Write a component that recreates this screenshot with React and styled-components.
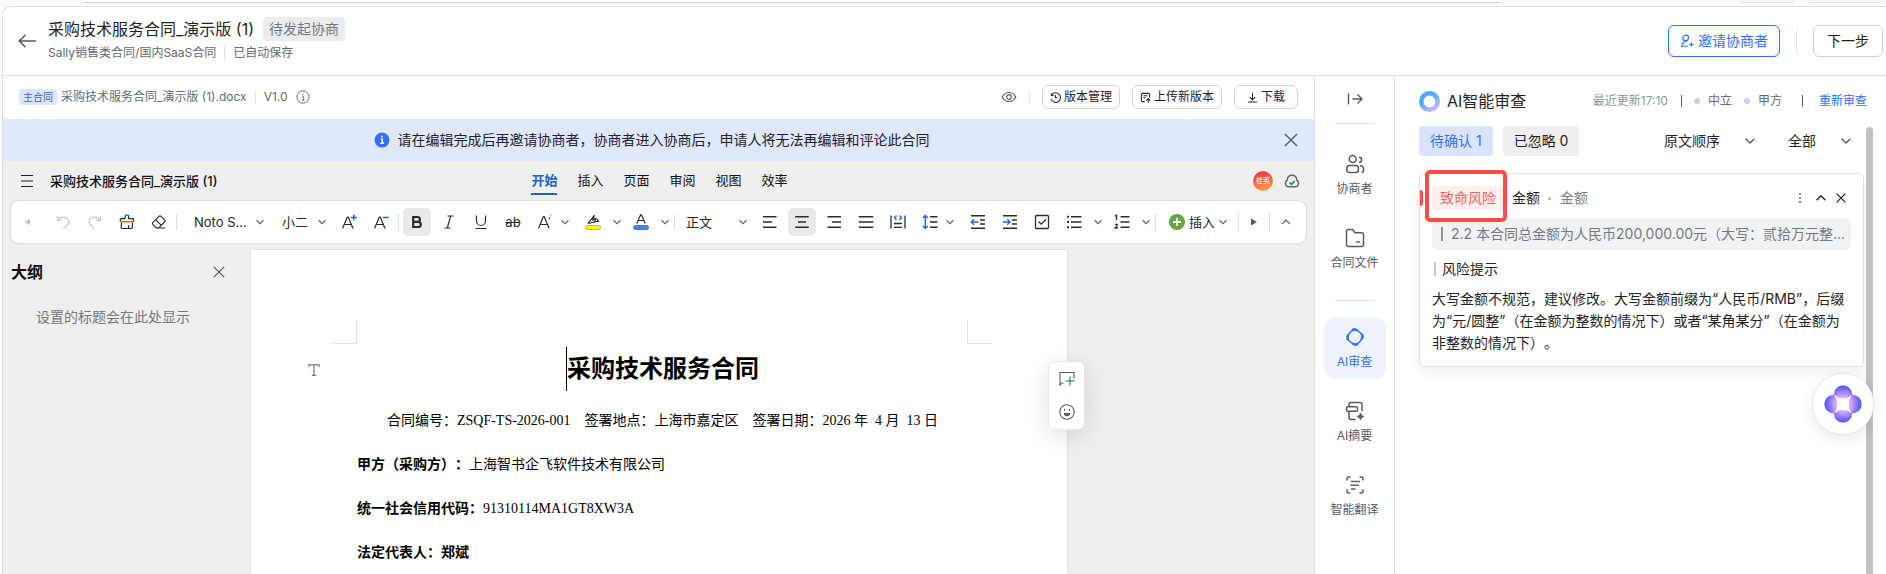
import React from 'react';
import styled, { createGlobalStyle, css } from 'styled-components';

const GlobalStyle = createGlobalStyle`
  * {
    box-sizing: border-box;
  }

  body {
    margin: 0;
    background: #fafafa;
    color: #1f2329;
    font-family: Inter, "Noto Sans CJK SC", sans-serif;
    font-size: 14px;
    line-height: 22px;
  }

  button, select {
    font: inherit;
    color: inherit;
    margin: 0;
    padding: 0;
    border: 0;
    background: none;
    white-space: nowrap;
    cursor: pointer;
  }

  h1, h2, h3, p {
    margin: 0;
    font-weight: normal;
  }

  svg {
    display: block;
    flex: none;
  }
`

/* ---------- shared ---------- */

const Page = styled.div`
  height: 100vh;
  display: flex;
  flex-direction: column;
  overflow: hidden;
`
const BrowserStrip = styled.div`
  display: flex;
  flex: none;
  height: 6px;
  padding-left: 82px;
  align-items: flex-start;
`
const AddressBar = styled.div`
  flex: 0 1 1420px;
  height: 3px;
  border-bottom: 1px solid #cfcfcf;
  border-radius: 0 0 12px 12px;
  background: #fff;
`
const StripPill = styled.div`
  width: ${props => props.$wide ? '76px' : '54px'};
  height: 3px;
  margin-left: ${props => props.$wide ? '14px' : '238px'};
  border-bottom: 1px solid #e4e4e4;
  border-radius: 0 0 12px 12px;
  background: #f4f4f4;
`
const Frame = styled.div`
  flex: 1;
  min-height: 0;
  display: flex;
  flex-direction: column;
  margin-left: 2px;
  border: 1px solid #dedfe0;
  border-width: 1px 0 0 1px;
  border-top-left-radius: 9px;
  background: #fffffe;
  overflow: hidden;
`
const VLine = styled.span`
  flex: none;
  width: 1px;
  height: ${props => props.$h || 12}px;
  background: ${props => props.$color || '#dee0e3'};
`
const IconButton = styled.button`
  display: flex;
  align-items: center;
  justify-content: center;
  flex: none;
  color: #555c66;
`

/* ---------- header ---------- */

const Header = styled.header`
  display: flex;
  align-items: center;
  flex: none;
  height: 69px;
  padding: 0 3px 0 14px;
  border-bottom: 1px solid #dee0e3;
`
const Titles = styled.div`
  display: flex;
  flex-direction: column;
  gap: 2px;
  margin-left: 11px;
  margin-bottom: 2px;
`
const TitleRow = styled.div`
  display: flex;
  align-items: center;
  gap: 9px;

  h1 {
    font-size: 16px;
    line-height: 24px;
  }
`
const StatusTag = styled.span`
  padding: 0 6px;
  border-radius: 4px;
  background: #ececec;
  color: #747980;
  line-height: 24px;
`
const Crumbs = styled.div`
  display: flex;
  align-items: center;
  gap: 8px;
  font-size: 12px;
  line-height: 20px;
  color: #646a73;
`
const HeaderActions = styled.div`
  display: flex;
  align-items: center;
  gap: 16px;
  margin-left: auto;
`
const HeaderButton = styled.button`
  display: flex;
  align-items: center;
  justify-content: center;
  gap: 4px;
  height: 32px;
  padding: 0 ${props => props.$primary ? 11 : 13}px;
  border: 1px solid ${props => props.$primary ? '#3370ff' : '#d0d3d6'};
  border-radius: 6px;
  color: ${props => props.$primary ? '#3370ff' : '#1f2329'};
`

/* ---------- body layout ---------- */

const Body = styled.div`
  flex: 1;
  min-height: 0;
  display: flex;
`
const Main = styled.main`
  flex: 1;
  min-width: 0;
  display: flex;
  flex-direction: column;
`
const FileBar = styled.div`
  display: flex;
  align-items: center;
  flex: none;
  height: 43px;
  padding: 0 16px 1px 16px;
  font-size: 12px;
  color: #646a73;
`
const FileTag = styled.span`
  padding: 0 4px;
  margin-right: 4px;
  border-radius: 4px;
  background: #dbe5ff;
  color: #3a62d8;
  font-size: 10px;
  line-height: 16px;
`
const FileInfo = styled.div`
  display: flex;
  align-items: center;
  gap: 8px;
`
const FileActions = styled.div`
  display: flex;
  align-items: center;
  gap: 12px;
  margin-left: auto;
`
const SmallButton = styled.button`
  display: flex;
  align-items: center;
  justify-content: center;
  gap: 3px;
  height: 24px;
  min-width: 64px;
  padding: 0 7px;
  border: 1px solid #d0d3d6;
  border-radius: 6px;
  color: #1f2329;
  line-height: 20px;
`
const Banner = styled.div`
  display: flex;
  align-items: center;
  flex: none;
  height: 42px;
  padding: 0 16px;
  background: #e0e8fd;

  p {
    flex: 1;
    display: flex;
    align-items: center;
    justify-content: center;
    gap: 8px;
    padding-bottom: 1px;
  }
`

/* ---------- editor ---------- */

const Editor = styled.section`
  flex: 1;
  min-height: 0;
  display: flex;
  flex-direction: column;
  background: #efefee;
`
const MenuRow = styled.div`
  display: grid;
  grid-template-columns: 1fr auto 1fr;
  align-items: center;
  flex: none;
  height: 40px;
  padding: 0 14px 0 16px;
  font-size: 13px;
`
const DocName = styled.div`
  display: flex;
  align-items: center;
  gap: 15px;
  font-weight: 500;
  color: #111;

  button {
    color: #222;
  }
`
const Tabs = styled.nav`
  display: flex;
  gap: 20px;
`
const Tab = styled.button`
  height: 28px;
  line-height: 22px;
  border-bottom: 2px solid transparent;
  color: #111;

  ${props => props.$active && css`
    color: #1f5fd0;
    font-weight: bold;
    border-bottom-color: #1f5fd0;
  `}
`
const MenuRight = styled.div`
  display: flex;
  align-items: center;
  justify-content: flex-end;
  gap: 11px;
`
const Avatar = styled.span`
  width: 20px;
  height: 20px;
  border-radius: 50%;
  background: linear-gradient(160deg, #f4453f 20%, #fca04a 90%);
  color: #fff;
  font-size: 7px;
  line-height: 20px;
  text-align: center;
`
const Toolbar = styled.div`
  display: flex;
  align-items: center;
  flex: none;
  height: 42px;
  margin: 0 8px;
  border-radius: 8px;
  background: #fffffe;
  box-shadow: 0 0 2px rgba(0, 0, 0, 0.25);
  font-size: 13px;
  color: #262626;
`
const Tool = styled.button`
  display: flex;
  align-items: center;
  justify-content: center;
  flex: none;
  width: 28px;
  height: 28px;
  margin: 0 2px;
  border-radius: 5px;
  background: ${props => props.$on ? '#e9e9e9' : 'none'};
  color: ${props => props.$muted ? '#c4c4c4' : '#2b2b2b'};
`
const ToolEdge = styled(IconButton)`
  width: 36px;
  height: 28px;
  padding-right: 4px;
  color: ${props => props.$muted ? '#c4c4c4' : '#666'};
`
const ToolArrow = styled.button`
  display: flex;
  align-items: center;
  justify-content: ${props => props.$tight ? 'flex-start' : 'center'};
  flex: none;
  width: 16px;
  height: 28px;
`
const ToolSep = styled.span`
  flex: none;
  width: 1px;
  height: ${props => props.$tall ? 20 : 16}px;
  margin: ${props => props.$tall ? '0' : '0 2px 0 1px'};
  background: #dcdcdc;
`
const SelectBox = styled.label`
  display: grid;
  align-items: center;
  flex: none;
  width: ${props => props.$w}px;
  padding: 0 7px 0 ${props => props.$pad}px;

  select {
    grid-area: 1 / 1;
    width: 100%;
    height: 28px;
    appearance: none;
  }

  svg {
    grid-area: 1 / 1;
    justify-self: end;
    pointer-events: none;
  }
`
const InsertButton = styled.button`
  display: flex;
  align-items: center;
  flex: none;
  height: 28px;
  padding: 0 7px 0 11px;
  gap: 4px;
  color: #222;
`
const ToolEnd = styled.div`
  display: flex;
  align-items: center;
  margin-left: auto;
`
const ScrollRight = styled(IconButton)`
  width: 30px;
  height: 28px;
`
const Workspace = styled.div`
  flex: 1;
  min-height: 0;
  display: flex;
  padding-top: 7px;
  overflow: hidden;
`
const Outline = styled.aside`
  flex: none;
  width: 248px;
  padding: 10px 26px 0 8px;

  p {
    padding: 22px 0 0 25px;
    color: #76777a;
  }
`
const OutlineHead = styled.div`
  display: flex;
  align-items: center;
  justify-content: space-between;

  h2 {
    font-size: 16px;
    line-height: 24px;
    font-weight: bold;
    color: #111;
  }
`
const Sheet = styled.article`
  position: relative;
  flex: 0 1 816px;
  display: grid;
  grid-template-columns: 106px 1fr 99px;
  align-content: start;
  padding-top: 70px;
  background: #fffffe;
  box-shadow: 0 0 2px rgba(0, 0, 0, 0.15);
  color: #000;
  font-family: "Liberation Serif", "Noto Sans CJK SC", serif;
  text-spacing-trim: space-all;
`
const CropMarks = styled.div`
  grid-column: 1 / -1;
  display: flex;
  justify-content: space-between;
  height: 27px;
  padding: 0 75px 0 81px;

  span {
    width: 25px;
    height: 24px;
    border: solid #e2e2e2;
    border-width: 0 1px 1px 0;
  }

  span:last-child {
    border-width: 0 0 1px 1px;
  }
`
const Gutter = styled.div`
  display: flex;
  align-items: center;
  justify-content: flex-end;
  padding: 0 37px 6px 0;
  color: #777;
`
const DocTitle = styled.h2`
  justify-self: center;
  margin-bottom: 8px;
  border-left: 1px solid #000;
  font-size: 24px;
  line-height: 44px;
  font-weight: bold;
`
const DocLine = styled.p`
  grid-column: 2;
  line-height: 44px;
  white-space: pre;
  text-align: ${props => props.$center ? 'center' : 'left'};
`
const FloatTools = styled.div`
  position: absolute;
  top: 111px;
  right: -18px;
  display: flex;
  flex-direction: column;
  justify-content: space-around;
  align-items: center;
  width: 37px;
  height: 69px;
  border: 1px solid #e6e6e6;
  border-radius: 7px;
  background: #fffffe;
  box-shadow: 0 6px 24px rgba(0, 0, 0, 0.12);
`

/* ---------- side rail ---------- */

const Rail = styled.nav`
  flex: none;
  width: 81px;
  display: flex;
  flex-direction: column;
  align-items: center;
  padding-top: 15px;
  border: 1px solid #dee0e3;
  border-width: 0 1px;
`
const RailLine = styled.span`
  flex: none;
  width: 40px;
  height: 1px;
  margin: ${props => props.$first ? '16px 0 20px' : '8px 0 16px'};
  background: #dee0e3;
`
const RailItem = styled.button`
  display: flex;
  flex-direction: column;
  align-items: center;
  flex: none;
  gap: 6px;
  width: 62px;
  height: 62px;
  margin-bottom: 12px;
  padding-top: 10px;
  border-radius: 12px;
  font-size: 12px;
  line-height: 18px;
  background: ${props => props.$active ? '#eff3ff' : 'none'};
  color: ${props => props.$active ? '#3370ff' : '#555c66'};
`

/* ---------- review panel ---------- */

const Panel = styled.aside`
  flex: 0 0 491px;
  min-width: 0;
  padding: 13px 13px 0 24px;
  display: flex;
  flex-direction: column;
`
const PanelHead = styled.div`
  display: flex;
  align-items: center;
  flex: none;
  gap: 7px;
  padding-right: 6px;

  h2 {
    font-size: 16px;
    line-height: 24px;
  }
`
const Meta = styled.div`
  display: flex;
  align-items: center;
  margin-left: auto;
  font-size: 12px;
  color: #646a73;

  time {
    margin-right: 13px;
    color: #8f959e;
  }

  a {
    margin-left: 16px;
    color: #3370ff;
    text-decoration: none;
  }
`
const Sides = styled.div`
  display: flex;
  gap: 12px;
  margin: 0 20px 0 12px;
`
const Side = styled.span`
  display: flex;
  align-items: center;
  gap: 8px;

  &::before {
    content: "";
    width: 6px;
    height: 6px;
    border-radius: 50%;
    background: #c3d0fb;
  }
`
const PanelScroll = styled.div`
  flex: 1;
  display: flex;
  margin-top: 12px;
`
const PanelContent = styled.div`
  flex: 1;
  min-width: 0;
`
const ScrollThumb = styled.div`
  flex: none;
  width: 7px;
  margin: 2px 0 0 2px;
  border-radius: 4px 4px 0 0;
  background: #c1c1c1;
`
const Filters = styled.div`
  display: flex;
  align-items: center;
  height: 32px;
`
const Pill = styled.button`
  height: 30px;
  margin-right: 10px;
  padding: 0 11px;
  border-radius: 4px;
  background: ${props => props.$active ? '#dbe4ff' : '#efefef'};
  color: ${props => props.$active ? '#3370ff' : '#1f2329'};
`
const FilterSelects = styled.div`
  display: flex;
  gap: 26px;
  margin-left: auto;
  padding-right: 6px;
`
const RiskCard = styled.article`
  display: flex;
  flex-direction: column;
  margin-top: 16px;
  padding: 12px;
  border: 1px solid #dee0e3;
  border-radius: 5px;
  box-shadow: 0 6px 12px rgba(31, 35, 41, 0.06);
`
const RiskHead = styled.div`
  display: flex;
  align-items: center;
  height: 24px;
`
const RiskMark = styled.span`
  width: 3px;
  height: 16px;
  margin-left: -12px;
  border-radius: 0 3px 3px 0;
  background: #f54a45;
`
const RiskLevel = styled.span`
  position: relative;
  margin-left: 9px;
  padding: 0 8px;
  background: #fff0ef;
  color: #fb625d;
  line-height: 24px;

  &::after {
    content: "";
    position: absolute;
    inset: -16px -3px -12px -7px;
    border: 4px solid #f94b48;
    border-radius: 5px;
  }
`
const RiskName = styled.h3`
  margin-left: 8px;
  font-size: 14px;
`
const RiskKind = styled.span`
  display: flex;
  align-items: center;
  gap: 9px;
  margin-left: 8px;
  color: #7a8088;

  &::before {
    content: "";
    width: 3px;
    height: 3px;
    border-radius: 50%;
    background: #a8acb2;
  }
`
const RiskTools = styled.div`
  display: flex;
  align-items: center;
  gap: 10px;
  margin-left: auto;
  padding-right: 5px;
`
const Quote = styled.div`
  display: flex;
  align-items: center;
  gap: 8px;
  height: 32px;
  margin-top: 8px;
  padding: 0 4px 0 9px;
  border-radius: 6px;
  background: #f1f2f4;
  color: #747a84;
  white-space: nowrap;
`
const Bar = styled.span`
  flex: none;
  width: 2px;
  height: 14px;
  background: ${props => props.$dark ? '#8f959e' : '#c4c7cb'};
`
const TipTitle = styled.div`
  display: flex;
  align-items: center;
  gap: 6px;
  margin-top: 8px;
  padding-left: 2px;
`
const Tip = styled.p`
  margin-top: 8px;
  text-spacing-trim: space-all;
`
const AssistantButton = styled.button`
  position: fixed;
  right: 12px;
  top: 373px;
  display: flex;
  align-items: center;
  justify-content: center;
  width: 62px;
  height: 62px;
  border: 1px solid #e6e8f0;
  border-radius: 50%;
  background: #fff;
  box-shadow: 0 4px 14px rgba(31, 35, 41, 0.1);
`

/* ---------- icons ---------- */

const Icon = ({ size = 16, box = 16, sw = 1.3, children }) => (
  <svg width={size} height={size} viewBox={`0 0 ${box} ${box}`} fill="none" stroke="currentColor" strokeWidth={sw} aria-hidden="true">
    {children}
  </svg>
)

const BLUE = '#1b66e5'

const Chevron = ({ size = 8, color = '#666', sw = 1.2 }) => (
  <svg width={size} height={size} viewBox="0 0 8 8" fill="none" stroke={color} strokeWidth={sw} aria-hidden="true">
    <path d="M.5 2.2 4 5.6 7.5 2.2" />
  </svg>
)
const Cross = ({ size = 12, color = '#555c66', sw = 1.3 }) => (
  <svg width={size} height={size} viewBox="0 0 12 12" fill="none" stroke={color} strokeWidth={sw} aria-hidden="true">
    <path d="M.8.8 11.2 11.2M11.2.8.8 11.2" />
  </svg>
)

const icons = {
  undo: <Icon sw={1.2}><path d="M2.5 2v4.500H7M2.800 6.200C5 3.400 9 2.200 11.800 4c3 2 2.600 5.600.2 7.600L8.500 14.500" /></Icon>,
  redo: <Icon sw={1.2}><path d="M13.500 2v4.500H9M13.200 6.200C11 3.400 7 2.200 4.200 4c-3 2-2.600 5.600-.2 7.600L7.500 14.500" /></Icon>,
  brush: <Icon sw={1.2}>
    <path d="M6.200 4.600V2.300a1.300 1.300 0 0 1 1.300-1.300h.8a1.300 1.300 0 0 1 1.300 1.300v2.300h4.100a1 1 0 0 1 1 1v2.200M1.300 7.800V5.600a1 1 0 0 1 1-1h3.900M2.600 8.500l-.5 4.800q0 1.200 1.200 1.200h8.800q1 0 1.200-1.200l.3-4.800M9.300 14.200l.6-3" />
    <path d="M1.200 7.800h13.400" stroke="#e8662a" strokeWidth="1.400" />
  </Icon>,
  eraser: <Icon sw={1.2}><path d="M5 13.800 1.700 10.200q-.7-.8 0-1.500l6.500-6.500q.8-.7 1.600 0l4 4q.7.800 0 1.500L7.800 13.800zM4.800 5.800l5.500 5.500M5 14h9.500" /></Icon>,
  aPlus: <Icon sw={1.2}><path d="M1.500 14.500 6.300 3h1L12 14.500M3.300 10.500h7" /><path d="M12.800.5v6M9.800 3.500h6" stroke={BLUE} strokeWidth="1.400" /></Icon>,
  aMinus: <Icon sw={1.2}><path d="M1.500 14.500 6.300 3h1L12 14.500M3.300 10.500h7" /><path d="M9.800 3.500h6" stroke={BLUE} strokeWidth="1.400" /></Icon>,
  bold: <Icon sw={2.2}><path d="M4.200 3h4.300a2.400 2.400 0 0 1 0 4.800H4.200zM4.200 7.800h5a2.600 2.600 0 0 1 0 5.200h-5z" /></Icon>,
  italic: <Icon sw={1.2}><path d="M6.500 2h6M3.500 14h6M9.700 2l-3.400 12" /></Icon>,
  underline: <Icon sw={1.2}><path d="M3.500 1.500V7a4.500 4.500 0 0 0 9 0V1.500M2.500 14.500h11" /></Icon>,
  textFx: <Icon sw={1.2}><path d="M1.500 14.500 6.300 2.500h1L12 14.500M3.300 10.500h7" /><path d="m12 5.500.8-2.700M13.500 1.500l.2-.8" stroke={BLUE} /></Icon>,
  marker: <Icon sw={1.2}>
    <path d="M3 9.500 9.500 1.200M3.500 9.500q3-.8 5.500-1.500M9.500 1.200 7.800 6l3-1.500L9.500 8l4-.8-1.500-2.500" />
    <rect x=".5" y="11.500" width="15" height="4" rx="2" fill="#ffff00" stroke="#a9a92b" strokeWidth=".8" />
  </Icon>,
  fontColor: <Icon sw={1.2}>
    <path d="M3.800 9.500 7.600.8h.8l3.800 8.700M5.200 6.500h5.600" />
    <rect x=".5" y="11.500" width="15" height="4" rx="2" fill="#4285f4" stroke="#3463b8" strokeWidth=".8" />
  </Icon>,
  left: <Icon sw={1.4}><path d="M1 2.700h13.500M1 8h9M1 13.300h13.500" /></Icon>,
  center: <Icon sw={1.4}><path d="M1.200 2.700h13.600M4 8h8M1.200 13.300h13.600" /></Icon>,
  right: <Icon sw={1.4}><path d="M1.500 2.700H15M6 8h9M1.500 13.300H15" /></Icon>,
  justify: <Icon sw={1.4}><path d="M.8 2.700h14.400M.8 8h14.400M.8 13.300h14.400" /></Icon>,
  distribute: <Icon sw={1.3}><path d="M1 1.500v13M15 1.500v13M4 9.500h8M4 13.300h8" /><path d="M6.500 1.500 4.500 3.700l2 2.300M9.500 1.500l2 2.200-2 2.300" stroke={BLUE} /></Icon>,
  spacing: <Icon sw={1.4}><path d="M8 2.700h7.500M8 8h7.500M8 13.300h7.500" /><path d="M3.300 1.500v13M.8 4 3.300 1.500 5.800 4M.8 12l2.500 2.500L5.800 12" stroke={BLUE} /></Icon>,
  outdent: <Icon sw={1.4}><path d="M1 1.700h14M10 6h5M10 10h5M1 14.300h14" /><path d="M8.500 8h-7M4 5.300 1.300 8 4 10.700" stroke={BLUE} /></Icon>,
  indent: <Icon sw={1.4}><path d="M1 1.700h14M10 6h5M10 10h5M1 14.300h14" /><path d="M1 8h7M5.300 5.300 8 8l-2.700 2.700" stroke={BLUE} /></Icon>,
  check: <Icon sw={1.3}><rect x="1.500" y="1.500" width="13" height="13" rx="1" /><path d="m4.500 7.500 2.700 2.700L11.800 5.500" /></Icon>,
  bullets: <Icon sw={1.4}><path d="M5 2.700h10.500M5 8h10.500M5 13.300h10.500" /><path d="M1 2.700h2M1 8h2M1 13.300h2" strokeWidth="2" /></Icon>,
  numbers: <Icon sw={1.4}><path d="M6.500 2.700h9M6.500 8h9M6.500 13.300h9" /><path d="M1 2.300 2.500 1.200v4.800M1 10.800q1.500-1.200 2.300 0c.4 1-1.300 2-2.200 3.200h2.800" strokeWidth="1.300" /></Icon>,
  people: <Icon size={20} box={20} sw={1.5}><rect x="1.800" y="11.500" width="11.500" height="7" rx="2.500" /><circle cx="7.700" cy="5" r="3.500" /><path d="M14 3.200a2.600 2.600 0 0 1 0 5.200M15 12h1.200a2.300 2.300 0 0 1 2.300 2.300v2.200a2 2 0 0 1-2 2" /></Icon>,
  folder: <Icon size={20} box={20} sw={1.5}><path d="M1.500 3.300A1.800 1.800 0 0 1 3.300 1.500h4.200L10 4.700h6.700a1.800 1.800 0 0 1 1.800 1.800v10.200a1.800 1.800 0 0 1-1.800 1.800H3.300a1.800 1.800 0 0 1-1.800-1.800zM11 14h4" /></Icon>,
  review: <Icon size={20} box={20} sw={1.6}>
    <rect x="3.400" y="3.400" width="13.200" height="13.200" rx="5.600" transform="rotate(32 10 10)" />
    <path d="M7.500 2.600 10 2.100l2 .8M17.400 7.500l.5 2.500-.8 2M12.500 17.400l-2.500.5-2-.8M2.600 12.500 2.100 10l.8-2" strokeWidth="2" strokeLinecap="round" strokeLinejoin="round" />
  </Icon>,
  summary: <Icon size={20} box={20} sw={1.5}><rect x="1.500" y="5.800" width="11" height="4.500" rx="1.500" /><path d="M4 5.500V3.300a1.800 1.800 0 0 1 1.800-1.800H15a2 2 0 0 1 2 2V10M4 10.500v6a2 2 0 0 0 2 2h4.500" /><path d="m15.500 12 1.200 2.300L19 15.500l-2.300 1.200-1.200 2.300-1.200-2.300L12 15.500l2.300-1.200z" fill="currentColor" strokeWidth=".6" /></Icon>,
  translate: <Icon size={20} box={20} sw={1.5}><path d="M2 5.500V3.500q0-1.500 1.500-1.500h2M14.500 2h2q1.500 0 1.500 1.500v2M18 14.500v2q0 1.500-1.500 1.500h-2M5.500 18h-2Q2 18 2 16.500v-2M6 6.500h9M5.500 10.200H14M6 14h4.500" /></Icon>,
  collapse: <Icon sw={1.4}><path d="M1.500 2.500v11M5.500 8h9.500M10.500 3.500 15 8l-4.500 4.500" /></Icon>,
  eye: <Icon sw={1.2}><path d="M1.200 8C4.500 2 11.500 2 14.800 8 11.500 14 4.500 14 1.200 8z" /><circle cx="8" cy="8" r="2.300" /></Icon>,
  info: <Icon size={14} sw={1.1}><circle cx="8" cy="8" r="7" /><path d="M7 7h1.300v4.500M6.500 11.500h3.500M8 4v1.400" /></Icon>,
  history: <Icon size={11} sw={1.5}><path d="M2.300 4.500a7 7 0 1 1-.8 5.500M2 1.800v3.400h3.200M8 4.500v4h3" /></Icon>,
  upload: <Icon size={11} sw={1.5}><path d="M14 8V3.500A1.500 1.500 0 0 0 12.500 2h-9A1.500 1.500 0 0 0 2 3.500v9A1.500 1.500 0 0 0 3.500 14H7M5 5.500h6M5 8.500h3M12 15.500V10M9 12.500 12 9.800l3 2.700" /></Icon>,
  download: <Icon size={11} sw={1.5}><path d="M8 1v10M4 7.300 8 11.200l4-3.900M1.500 14.500h13" /></Icon>,
  invite: <Icon size={14} sw={1.4}><circle cx="7" cy="4.500" r="3.200" transform="skewX(-6)" /><path d="M8.500 8C5 8.500 2.300 11 2 14h7M13 9.500v5M10.500 12h5" /></Icon>,
  cloud: <Icon sw={1.4}><path d="M4.500 13.800a3.500 3.500 0 0 1-1.300-6.500C3.500.6 12.500.6 12.800 7.300a3.500 3.500 0 0 1-1.300 6.500z" stroke="#666" /><path d="m5.500 9.500 2 1.800 3.200-3.300" stroke="#23a455" strokeWidth="1.800" /></Icon>,
  comment: <Icon sw={1.1}><path d="M15 7.500V1.500H1v12.500l2.300-2h1.200" /><path d="M6.500 10h9M11 5.500v9" stroke="#1b7a48" /></Icon>,
  smile: <Icon sw={1.1}><circle cx="8" cy="8" r="7.200" /><path d="M5.500 5v2M10.500 5v2" /><path d="M4.800 9h6.400a3.200 3.200 0 0 1-6.400 0z" fill="currentColor" stroke="none" /></Icon>,
}

const railItems = [
  { label: 'AI审查', icon: 'review', active: true },
  { label: 'AI摘要', icon: 'summary' },
  { label: '智能翻译', icon: 'translate' },
]

const ToolButton = ({ name, label, ...rest }) => (
  <Tool type="button" aria-label={label} {...rest}>{icons[name]}</Tool>
)

const ToolMenu = ({ name, label, tight }) => (
  <>
    <ToolButton name={name} label={label} />
    <ToolArrow type="button" $tight={tight} aria-label={`${label}选项`}><Chevron /></ToolArrow>
  </>
)

const Select = ({ label, value, width, pad = 0, chevron }) => (
  <SelectBox $w={width} $pad={pad}>
    <select aria-label={label} defaultValue={value}>
      <option>{value}</option>
    </select>
    <Chevron {...chevron} />
  </SelectBox>
)

const TopHeader = () => (
  <Header>
    <IconButton type="button" aria-label="返回">
      <Icon size={20} box={20} sw={1.6}><path d="M19 10H2.500M8.500 3.800 2.300 10l6.200 6.200" /></Icon>
    </IconButton>
    <Titles>
      <TitleRow>
        <h1>采购技术服务合同_演示版 (1)</h1>
        <StatusTag>待发起协商</StatusTag>
      </TitleRow>
      <Crumbs>
        <span>Sally销售类合同/国内SaaS合同</span>
        <VLine $h={16} />
        <span>已自动保存</span>
      </Crumbs>
    </Titles>
    <HeaderActions>
      <HeaderButton type="button" $primary>{icons.invite}邀请协商者</HeaderButton>
      <VLine $h={24} />
      <HeaderButton type="button">下一步</HeaderButton>
    </HeaderActions>
  </Header>
)

const FileHeader = () => (
  <FileBar>
    <FileTag>主合同</FileTag>
    <FileInfo>
      <span>采购技术服务合同_演示版 (1).docx</span>
      <VLine />
      <span>V1.0</span>
      {icons.info}
    </FileInfo>
    <FileActions>
      <IconButton type="button" aria-label="预览">{icons.eye}</IconButton>
      <VLine />
      <SmallButton type="button">{icons.history}版本管理</SmallButton>
      <SmallButton type="button">{icons.upload}上传新版本</SmallButton>
      <SmallButton type="button">{icons.download}下载</SmallButton>
    </FileActions>
  </FileBar>
)

const EditorToolbar = () => (
  <Toolbar>
    <ToolEdge type="button" $muted aria-label="向左滚动">
      <Icon size={8} box={8}><path d="M7 .8v6.400L1.200 4z" fill="currentColor" stroke="none" /></Icon>
    </ToolEdge>
    <ToolButton name="undo" label="撤销" $muted />
    <ToolButton name="redo" label="恢复" $muted />
    <ToolButton name="brush" label="格式刷" />
    <ToolButton name="eraser" label="清除格式" />
    <ToolSep />
    <Select label="字体" value="Noto S..." width={92} pad={15} />
    <Select label="字号" value="小二" width={62} pad={11} />
    <ToolButton name="aPlus" label="增大字号" />
    <ToolButton name="aMinus" label="减小字号" />
    <ToolSep />
    <ToolButton name="bold" label="加粗" $on />
    <ToolButton name="italic" label="斜体" />
    <ToolButton name="underline" label="下划线" />
    <Tool type="button"><s>ab</s></Tool>
    <ToolMenu name="textFx" label="文字效果" tight />
    <ToolMenu name="marker" label="突出显示" />
    <ToolMenu name="fontColor" label="字体颜色" />
    <ToolSep />
    <Select label="样式" value="正文" width={77} pad={9} />
    <ToolButton name="left" label="左对齐" />
    <ToolButton name="center" label="居中" $on />
    <ToolButton name="right" label="右对齐" />
    <ToolButton name="justify" label="两端对齐" />
    <ToolButton name="distribute" label="分散对齐" />
    <ToolMenu name="spacing" label="行距" tight />
    <ToolButton name="outdent" label="减少缩进" />
    <ToolButton name="indent" label="增加缩进" />
    <ToolButton name="check" label="复选框" />
    <ToolMenu name="bullets" label="项目符号" />
    <ToolMenu name="numbers" label="编号" />
    <ToolSep />
    <InsertButton type="button">
      <Icon><circle cx="8" cy="8" r="8" fill="#62a744" stroke="none" /><path d="M8 4v8M4 8h8" stroke="#fff" strokeWidth="1.800" /></Icon>
      插入
      <Chevron />
    </InsertButton>
    <ToolEnd>
      <ToolSep $tall />
      <ScrollRight type="button" aria-label="向右滚动">
        <Icon size={8} box={8}><path d="M1 .4v7.200L7 4z" fill="currentColor" stroke="none" /></Icon>
      </ScrollRight>
      <ToolSep $tall />
      <ToolEdge type="button" aria-label="收起工具栏">
        <Icon size={10} box={10} sw={1.2}><path d="M1 7 5 3l4 4" /></Icon>
      </ToolEdge>
    </ToolEnd>
  </Toolbar>
)

const Document = () => (
  <Sheet>
    <CropMarks><span /><span /></CropMarks>
    <Gutter>
      <Icon size={12} box={12} sw={1.2}><path d="M.8 3V.9h10.400V3M6 1v10.300M3.800 11.300h4.400" /></Icon>
    </Gutter>
    <DocTitle>采购技术服务合同</DocTitle>
    <DocLine $center>{'合同编号：ZSQF-TS-2026-001    签署地点：上海市嘉定区    签署日期：2026 年  4 月  13 日'}</DocLine>
    <DocLine><b>甲方（采购方）：</b>上海智书企飞软件技术有限公司</DocLine>
    <DocLine><b>统一社会信用代码：</b>91310114MA1GT8XW3A</DocLine>
    <DocLine><b>法定代表人：郑斌</b></DocLine>
    <FloatTools>
      <IconButton type="button" aria-label="添加评论">{icons.comment}</IconButton>
      <IconButton type="button" aria-label="表情">{icons.smile}</IconButton>
    </FloatTools>
  </Sheet>
)

const SideRail = () => (
  <Rail>
    <IconButton type="button" aria-label="收起">{icons.collapse}</IconButton>
    <RailLine $first />
    <RailItem type="button">{icons.people}协商者</RailItem>
    <RailItem type="button">{icons.folder}合同文件</RailItem>
    <RailLine />
    {railItems.map(item => (
      <RailItem type="button" key={item.label} $active={item.active}>
        {icons[item.icon]}{item.label}
      </RailItem>
    ))}
  </Rail>
)

const ReviewPanel = () => (
  <Panel>
    <PanelHead>
      <svg width="21" height="21" viewBox="0 0 21 21" aria-hidden="true">
        <defs>
          <linearGradient id="ring" x1="0" y1="0" x2=".6" y2="1">
            <stop offset="0" stopColor="#4fa8ff" />
            <stop offset=".55" stopColor="#55b2f8" />
            <stop offset="1" stopColor="#c3b2fb" />
          </linearGradient>
        </defs>
        <circle cx="10.500" cy="10.500" r="8.200" fill="none" stroke="url(#ring)" strokeWidth="4.600" />
      </svg>
      <h2>AI智能审查</h2>
      <Meta>
        <time>最近更新17:10</time>
        <VLine $color="#555c66" />
        <Sides>
          <Side>中立</Side>
          <Side>甲方</Side>
        </Sides>
        <VLine $color="#555c66" />
        <a href="#review">重新审查</a>
      </Meta>
    </PanelHead>
    <PanelScroll>
      <PanelContent>
        <Filters>
          <Pill type="button" $active>待确认 1</Pill>
          <Pill type="button">已忽略 0</Pill>
          <FilterSelects>
            <Select label="排序" value="原文顺序" width={98} chevron={{ size: 10, color: '#555c66' }} />
            <Select label="筛选" value="全部" width={70} chevron={{ size: 10, color: '#555c66' }} />
          </FilterSelects>
        </Filters>
        <RiskCard>
          <RiskHead>
            <RiskMark />
            <RiskLevel>致命风险</RiskLevel>
            <RiskName>金额</RiskName>
            <RiskKind>金额</RiskKind>
            <RiskTools>
              <IconButton type="button" aria-label="更多">
                <Icon size={12} box={12}><path d="M6 1v2M6 5v2M6 9v2" stroke="#666" strokeWidth="1.600" /></Icon>
              </IconButton>
              <IconButton type="button" aria-label="收起">
                <Icon size={10} box={10} sw={1.4}><path d="M.6 7.200 5 2.800l4.400 4.400" stroke="#1f2329" /></Icon>
              </IconButton>
              <IconButton type="button" aria-label="关闭"><Cross size={10} color="#1f2329" sw={1.5} /></IconButton>
            </RiskTools>
          </RiskHead>
          <Quote>
            <Bar $dark />
            <p>2.2 本合同总金额为人民币200,000.00元（大写：贰拾万元整...</p>
          </Quote>
          <TipTitle><Bar />风险提示</TipTitle>
          <Tip>大写金额不规范，建议修改。大写金额前缀为“人民币/RMB”，后缀为“元/圆整”（在金额为整数的情况下）或者“某角某分”（在金额为非整数的情况下）。</Tip>
        </RiskCard>
      </PanelContent>
      <ScrollThumb />
    </PanelScroll>
    <AssistantButton type="button" aria-label="智能助手">
      <svg width="38" height="38" viewBox="0 0 38 38" aria-hidden="true">
        <defs>
          <radialGradient id="petal" gradientUnits="userSpaceOnUse" cx="19" cy="19" r="19">
            <stop offset=".3" stopColor="#efbdf8" />
            <stop offset=".6" stopColor="#a78bf4" />
            <stop offset=".9" stopColor="#5f5cf8" />
          </radialGradient>
        </defs>
        <g fill="url(#petal)">
          <circle cx="19" cy="9.500" r="9.200" />
          <circle cx="19" cy="28.500" r="9.200" />
          <circle cx="9.500" cy="19" r="9.200" />
          <circle cx="28.500" cy="19" r="9.200" />
        </g>
        <path d="M10 10q9 7 18 0-7 9 0 18-9-7-18 0 7-9 0-18z" fill="#fff" />
      </svg>
    </AssistantButton>
  </Panel>
)

const App = () => (
  <Page>
    <GlobalStyle />
    <BrowserStrip>
      <AddressBar />
      <StripPill />
      <StripPill $wide />
    </BrowserStrip>
    <Frame>
      <TopHeader />
      <Body>
        <Main>
          <FileHeader />
          <Banner>
            <p>
              <Icon><circle cx="8" cy="8" r="7.500" fill="#3370ff" stroke="none" /><path d="M6.800 7.200h1.500v4M6.300 11.300h3.600M8 3.800v1.700" stroke="#fff" strokeWidth="1.500" /></Icon>
              请在编辑完成后再邀请协商者，协商者进入协商后，申请人将无法再编辑和评论此合同
            </p>
            <IconButton type="button" aria-label="关闭提示"><Cross size={14} sw={1.2} /></IconButton>
          </Banner>
          <Editor>
            <MenuRow>
              <DocName>
                <IconButton type="button" aria-label="菜单">
                  <Icon sw={1.2}><path d="M2 2.500h12M2 8h12M2 13.500h12" /></Icon>
                </IconButton>
                采购技术服务合同_演示版 (1)
              </DocName>
              <Tabs>
                <Tab type="button" $active>开始</Tab>
                <Tab type="button">插入</Tab>
                <Tab type="button">页面</Tab>
                <Tab type="button">审阅</Tab>
                <Tab type="button">视图</Tab>
                <Tab type="button">效率</Tab>
              </Tabs>
              <MenuRight>
                <Avatar>桂英</Avatar>
                {icons.cloud}
              </MenuRight>
            </MenuRow>
            <EditorToolbar />
            <Workspace>
              <Outline>
                <OutlineHead>
                  <h2>大纲</h2>
                  <IconButton type="button" aria-label="关闭大纲"><Cross color="#555" sw={1.1} /></IconButton>
                </OutlineHead>
                <p>设置的标题会在此处显示</p>
              </Outline>
              <Document />
            </Workspace>
          </Editor>
        </Main>
        <SideRail />
        <ReviewPanel />
      </Body>
    </Frame>
  </Page>
)

export default App
